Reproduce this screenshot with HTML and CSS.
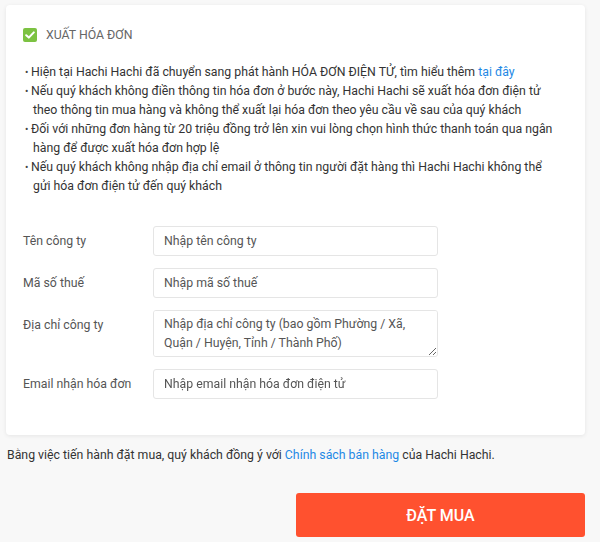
FILE: index.html
```html
<!DOCTYPE html>
<html lang="vi">
<head>
    <meta charset="UTF-8">
    <meta name="viewport" content="width=device-width, initial-scale=1.0">
    <title>Xuất hóa đơn</title>
    <link rel="stylesheet" href="styles.css">
</head>
<body>
    <div class="page">
        <div class="card">
            <label class="invoice-toggle">
                <span class="check-box">
                    <svg width="10" height="8" viewBox="0 0 10 8"><path d="M1.2 4.2 L3.8 6.6 L8.8 1.4" fill="none" stroke="#fff" stroke-width="2" stroke-linecap="round" stroke-linejoin="round"/></svg>
                </span>
                <span class="toggle-text">Xuất hóa đơn</span>
            </label>

            <ul class="notes">
                <li>Hiện tại Hachi Hachi đã chuyển sang phát hành HÓA ĐƠN ĐIỆN TỬ, tìm hiểu thêm <a href="#">tại đây</a></li>
                <li>Nếu quý khách không điền thông tin hóa đơn ở bước này, Hachi Hachi sẽ xuất hóa đơn điện tử theo thông tin mua hàng và không thể xuất lại hóa đơn theo yêu cầu về sau của quý khách</li>
                <li>Đối với những đơn hàng từ 20 triệu đồng trở lên xin vui lòng chọn hình thức thanh toán qua ngân hàng để được xuất hóa đơn hợp lệ</li>
                <li>Nếu quý khách không nhập địa chỉ email ở thông tin người đặt hàng thì Hachi Hachi không thể gửi hóa đơn điện tử đến quý khách</li>
            </ul>

            <div class="invoice-form">
                <div class="row">
                    <label for="company">Tên công ty</label>
                    <input type="text" id="company" placeholder="Nhập tên công ty">
                </div>
                <div class="row">
                    <label for="tax">Mã số thuế</label>
                    <input type="text" id="tax" placeholder="Nhập mã số thuế">
                </div>
                <div class="row">
                    <label for="address">Địa chỉ công ty</label>
                    <textarea id="address" rows="2" placeholder="Nhập địa chỉ công ty (bao gồm Phường / Xã, Quận / Huyện, Tỉnh / Thành Phố)"></textarea>
                </div>
                <div class="row">
                    <label for="email">Email nhận hóa đơn</label>
                    <input type="email" id="email" placeholder="Nhập email nhận hóa đơn điện tử">
                </div>
            </div>
        </div>

        <p class="policy">Bằng việc tiến hành đặt mua, quý khách đồng ý với <a href="#">Chính sách bán hàng</a> của Hachi Hachi.</p>

        <div class="actions">
            <button type="button" class="order-btn">Đặt mua</button>
        </div>
    </div>
</body>
</html>
```

FILE: styles.css
```css
body {
    margin: 0;
    font-family: Roboto, "Liberation Sans", Arial, sans-serif;
    font-size: 12.3px;
    line-height: 19px;
    color: #333;
    background-color: #f8f8f8;
}
a {
    color: #1e88e5;
    text-decoration: none;
}
.page {
    width: 579px;
    padding: 5px 0 0 6px;
}
.card {
    background-color: #fff;
    border-radius: 4px;
    box-shadow: 0 1px 4px rgba(0, 0, 0, 0.08);
    padding: 23px 17px 36px 17px;
}
.invoice-toggle {
    display: flex;
    align-items: center;
    gap: 9px;
    height: 14px;
}
.check-box {
    width: 14px;
    height: 14px;
    border-radius: 2px;
    background-color: #7cc242;
    display: flex;
    align-items: center;
    justify-content: center;
}
.toggle-text {
    text-transform: uppercase;
    color: #666;
}
.notes {
    list-style: none;
    margin: 21px 0 0 0;
    padding: 0 13px 0 10px;
}
.notes li {
    position: relative;
    text-indent: -2px;
}
.notes li::before {
    content: "\2022";
    position: absolute;
    left: -8px;
    text-indent: 0;
    color: #444;
    font-size: 10px;
}
.invoice-form {
    margin-top: 30px;
    display: flex;
    flex-direction: column;
    gap: 12px;
}
.row {
    display: flex;
    align-items: flex-start;
}
.row label {
    width: 130px;
    color: #555;
    padding-top: 6px;
}
.row input,
.row textarea {
    width: 285px;
    box-sizing: border-box;
    border: 1px solid #e5e5e5;
    border-radius: 3px;
    font-family: inherit;
    font-size: 12.3px;
    line-height: 19px;
    color: #333;
    padding: 5px 10px;
    margin: 0;
}
.row input {
    height: 30px;
}
.row textarea {
    height: 47px;
    padding-top: 4px;
    resize: vertical;
}
.row input::placeholder,
.row textarea::placeholder {
    color: #555;
}
.policy {
    margin: 11px 0 0 1px;
}
.actions {
    display: flex;
    justify-content: flex-end;
    margin-top: 28px;
}
.order-btn {
    width: 289px;
    height: 44px;
    border: none;
    border-radius: 3px;
    background-color: #ff512f;
    color: #fff;
    font-family: inherit;
    font-size: 16px;
    font-weight: 500;
    text-transform: uppercase;
    cursor: pointer;
}
```
